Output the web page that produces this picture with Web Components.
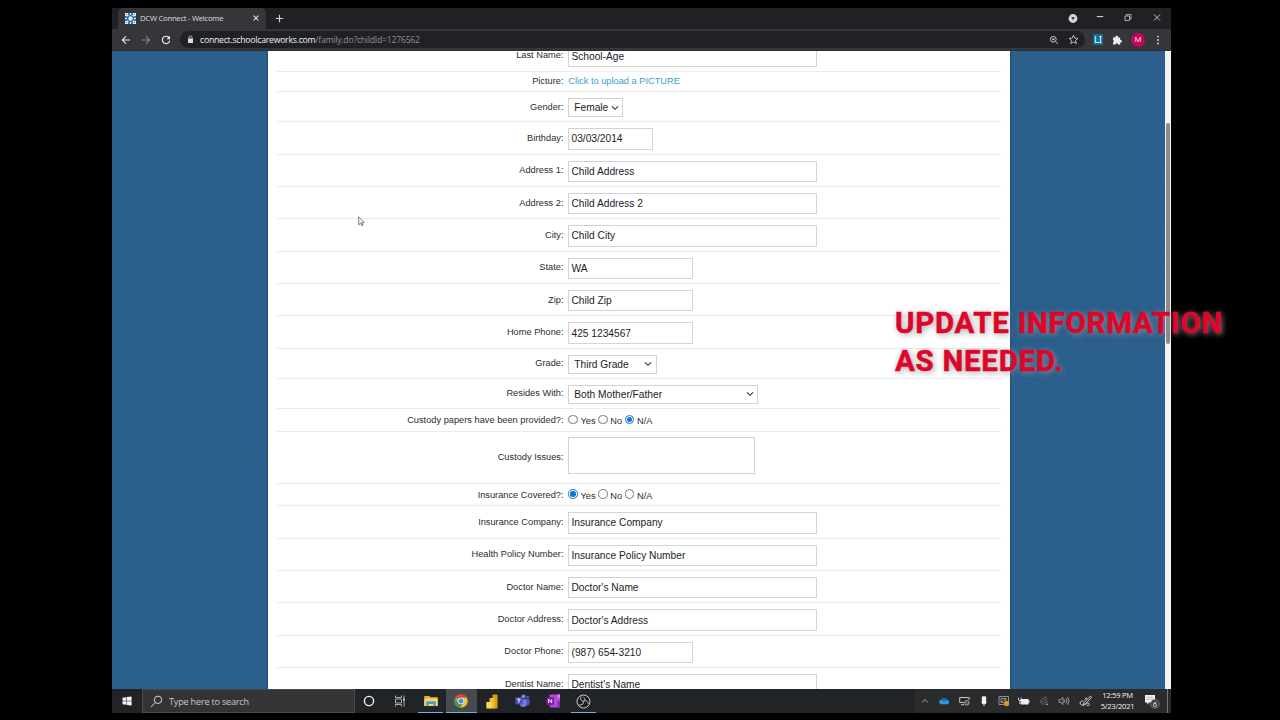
<!DOCTYPE html>
<html lang="en">
<head>
<meta charset="utf-8">
<title>DCW Connect - Welcome</title>
<style>
    body {
        margin: 0;
        width: 1280px;
        height: 720px;
        overflow: hidden;
        background: #000;
        font-family: "Liberation Sans", Arial, sans-serif;
    }
</style>
</head>
<body>
<screen-frame>
    <tab-strip slot="top" title-text="DCW Connect - Welcome"></tab-strip>
    <tool-bar slot="top" host="connect.schoolcareworks.com" path="/family.do?childId=1276562"></tool-bar>
    <page-view>
        <form-row label="Last Name:" h="32.38"><text-field w="248.6">School-Age</text-field></form-row>
        <form-row label="Picture:" h="20.4"><link-text>Click to upload a PICTURE</link-text></form-row>
        <form-row label="Gender:" h="30"><select-field w="54.7">Female</select-field></form-row>
        <form-row label="Birthday:" h="32.38"><text-field w="85">03/03/2014</text-field></form-row>
        <form-row label="Address 1:" h="32.38"><text-field w="248.6">Child Address</text-field></form-row>
        <form-row label="Address 2:" h="32.38"><text-field w="248.6">Child Address 2</text-field></form-row>
        <form-row label="City:" h="32.38"><text-field w="248.6">Child City</text-field></form-row>
        <form-row label="State:" h="32.38"><text-field w="125">WA</text-field></form-row>
        <form-row label="Zip:" h="32.38"><text-field w="125">Child Zip</text-field></form-row>
        <form-row label="Home Phone:" h="32.38"><text-field w="125">425 1234567</text-field></form-row>
        <form-row label="Grade:" h="30.1"><select-field w="88.3">Third Grade</select-field></form-row>
        <form-row label="Resides With:" h="30.1"><select-field w="189.7">Both Mother/Father</select-field></form-row>
        <form-row label="Custody papers have been provided?:" h="22.6"><radio-set checked="N/A"></radio-set></form-row>
        <form-row label="Custody Issues:" h="52.3"><area-field></area-field></form-row>
        <form-row label="Insurance Covered?:" h="22.4"><radio-set checked="Yes"></radio-set></form-row>
        <form-row label="Insurance Company:" h="32.38"><text-field w="248.6">Insurance Company</text-field></form-row>
        <form-row label="Health Policy Number:" h="32.38"><text-field w="248.6">Insurance Policy Number</text-field></form-row>
        <form-row label="Doctor Name:" h="32.38"><text-field w="248.6">Doctor's Name</text-field></form-row>
        <form-row label="Doctor Address:" h="32.38"><text-field w="248.6">Doctor's Address</text-field></form-row>
        <form-row label="Doctor Phone:" h="32.38"><text-field w="125">(987) 654-3210</text-field></form-row>
        <form-row label="Dentist Name:" h="32.38"><text-field w="248.6">Dentist's Name</text-field></form-row>
    </page-view>
    <task-bar slot="bottom"></task-bar>
</screen-frame>
<video-caption><span>UPDATE INFORMATION</span><span slot="second">AS NEEDED.</span></video-caption>
<mouse-pointer></mouse-pointer>

<script>
class BaseElement extends HTMLElement {
    connectedCallback() {
        const template = document.createElement("template");
        template.innerHTML = this.getStyles() + this.getTemplate();
        this.attachShadow({ mode: "open" });
        this.shadowRoot.appendChild(template.content.cloneNode(true));
    }
    getStyles() { return ""; }
    getTemplate() { return "<slot></slot>"; }
}

class ScreenFrame extends BaseElement {
    getStyles() {
        return `<style>
            :host { display: flex; flex-direction: column; width: 1059px; height: 705px; margin: 8px 0 0 112px; overflow: hidden; }
            .middle { flex: 1; min-height: 0; display: flex; }
        </style>`;
    }
    getTemplate() {
        return `<slot name="top"></slot><div class="middle"><slot></slot></div><slot name="bottom"></slot>`;
    }
}

class TabStrip extends BaseElement {
    getStyles() {
        return `<style>
            :host { display: flex; height: 21px; flex: none; background: #202124; font-family: "Open Sans", "Noto Sans", sans-serif; }
            .tab { box-sizing: border-box; width: 148px; margin-left: 6px; padding: 0 6px 1px 6.5px; display: flex; align-items: center; background: #35363a; border-radius: 5px 5px 0 0; color: #dcdde0; font-size: 7.7px; white-space: nowrap; }
            .tab span { flex: 1; margin-left: 4.5px; letter-spacing: -.26px; }
            .plus { width: 26px; display: flex; align-items: center; justify-content: center; }
            .window { margin-left: auto; display: flex; align-items: center; padding-bottom: 2px; }
            .window div { width: 28px; display: flex; justify-content: center; }
            svg { display: block; }
        </style>`;
    }
    getTemplate() {
        return `
        <div class="tab">
            <svg width="11" height="11" viewBox="0 0 11 11"><rect width="11" height="11" fill="#e8f0f7"/><path d="M3 0h2v2H3zM6 0h2v2H6zM0 3h2v2H0zM0 6h2v2H0zM9 3h2v2H9zM9 6h2v2H9zM3 9h2v2H3zM6 9h2v2H6zM1 1h1v1H1zM9 1h1v1H9zM1 9h1v1H1zM9 9h1v1H9z" fill="#3e79ae"/><circle cx="5.5" cy="5.5" r="2.9" fill="none" stroke="#2c6499" stroke-width="1.4"/></svg>
            <span>${this.getAttribute("title-text")}</span>
            <svg width="8" height="8" viewBox="0 0 8 8"><path d="M1.6 1.6l4.8 4.8M6.4 1.6L1.6 6.4" stroke="#e3e4e6" stroke-width="1.1"/></svg>
        </div>
        <div class="plus"><svg width="9" height="9" viewBox="0 0 9 9"><path d="M4.5.8v7.4M.8 4.5h7.4" stroke="#d0d2d4" stroke-width="1.1"/></svg></div>
        <div class="window">
            <div style="width:27px"><svg width="10" height="10" viewBox="0 0 10 10"><circle cx="5" cy="5.5" r="4.4" fill="#d5d6d8"/><path d="M3.2 4.2h3.6L5 7z" fill="#202124"/></svg></div>
            <div><svg width="8" height="8" viewBox="0 0 8 8"><path d="M.8 2.6h6.4" stroke="#dcdddf"/></svg></div>
            <div><svg width="8" height="8" viewBox="0 0 8 8"><path d="M1 2h4.5v4.5H1zM2.5 1.9V.5H7V5H5.6" fill="none" stroke="#c8c9cb" stroke-width=".8"/></svg></div>
            <div style="width:29px"><svg width="8" height="8" viewBox="0 0 8 8"><path d="M1 .5l6 6M7 .5l-6 6" stroke="#d5d6d8" stroke-width=".9"/></svg></div>
        </div>`;
    }
}

class ToolBar extends BaseElement {
    getStyles() {
        return `<style>
            :host { display: flex; align-items: center; height: 22px; flex: none; box-sizing: border-box; padding-left: 4px; background: #35363a; font-family: "Open Sans", "Noto Sans", sans-serif; border-bottom: 1px solid #2b3038; }
            .nav { width: 20px; display: flex; justify-content: center; }
            .omnibox { width: 905px; height: 17px; margin-left: 4px; box-sizing: border-box; padding: 0 6px 0 6px; border-radius: 9px; background: #202124; display: flex; align-items: center; font-size: 8.7px; color: #8d9094; white-space: nowrap; }
            .url { margin-left: 5px; flex: 1; letter-spacing: -.25px; }
            b { font-weight: 400; color: #f0f1f2; }
            .omnibox svg + svg { margin-left: 9px; }
            .li { width: 10px; height: 11px; margin-left: 8px; background: #0c6f93; color: #fff; font: 9.5px/11px "Noto Sans", sans-serif; text-align: center; }
            .m { width: 14px; height: 14px; border-radius: 7px; margin: 0 8px 0 9px; background: #c2045f; color: #f7cfe2; font: 8px/14px Roboto, sans-serif; text-align: center; }
            svg { display: block; }
        </style>`;
    }
    getTemplate() {
        return `
        <div class="nav"><svg width="10" height="10" viewBox="0 0 10 10"><path d="M9 5H1.5M5 1.3L1.3 5 5 8.7" fill="none" stroke="#e8e9eb" stroke-width="1.1"/></svg></div>
        <div class="nav"><svg width="10" height="10" viewBox="0 0 10 10"><path d="M1 5h7.5M5 1.3L8.7 5 5 8.7" fill="none" stroke="#85878b" stroke-width="1.1"/></svg></div>
        <div class="nav"><svg width="10" height="10" viewBox="0 0 10 10"><path d="M8.2 3A3.7 3.7 0 1 0 8.7 5.6" fill="none" stroke="#e8e9eb" stroke-width="1.2"/><path d="M9 .8v3.5H5.5z" fill="#e8e9eb"/></svg></div>
        <div class="omnibox">
            <svg width="9" height="9" viewBox="0 0 9 9"><rect x="2" y="3.6" width="5" height="4.4" rx=".5" fill="#dcdde0"/><path d="M3 4V2.5a1.5 1.5 0 0 1 3 0V4" fill="none" stroke="#dcdde0" stroke-width=".8"/></svg>
            <div class="url"><b>${this.getAttribute("host")}</b>${this.getAttribute("path")}</div>
            <svg width="10" height="10" viewBox="0 0 10 10"><circle cx="4.3" cy="4.3" r="2.9" fill="none" stroke="#c8cacd"/><path d="M6.4 6.4L9 9M3 4.3h2.6M4.3 3v2.6" stroke="#c8cacd" stroke-width=".9"/></svg>
            <svg width="11" height="11" viewBox="0 0 11 11"><path d="M5.5 1.2l1.3 2.9 3.1.3-2.4 2.1.8 3.1-2.8-1.7-2.8 1.7.8-3.1L1.1 4.4l3.1-.3z" fill="none" stroke="#c8cacd" stroke-width=".9"/></svg>
        </div>
        <div class="li">LI</div>
        <svg style="margin-left:9px" width="10" height="10" viewBox="0 0 10 10"><path d="M1 2.6h2.4a1.4 1.4 0 1 1 2.6 0h2.2V5a1.3 1.3 0 1 1 0 2.5v2H6a1.2 1.2 0 0 0-2.4 0H1V7.2a1.2 1.2 0 0 0 0-2.3z" fill="#eceded"/></svg>
        <div class="m">M</div>
        <svg width="10" height="10" viewBox="0 0 10 10"><g fill="#e0e1e3"><circle cx="5" cy="1.6" r=".9"/><circle cx="5" cy="5" r=".9"/><circle cx="5" cy="8.4" r=".9"/></g></svg>`;
    }
}

class PageView extends BaseElement {
    getStyles() {
        return `<style>
            :host { flex: 1; min-width: 0; display: flex; }
            .back { flex: 1; min-width: 0; display: grid; overflow: hidden; background: #2b608d; }
            .back > * { grid-area: 1 / 1; }
            .sheet { box-sizing: border-box; width: 741.5px; height: 638px; margin-left: 156px; padding: 0 9px 0 8px; overflow: hidden; background: #fff; box-shadow: 0 0 2px #0b3459; z-index: 1; }
            .scrolled { margin-top: -11.6px; }
            .bar { width: 6.5px; background: #f3f3f1; display: flex; justify-content: center; }
            .thumb { width: 4px; height: 221px; margin-top: 72px; border-radius: 2px; background: #8c8c8a; }
        </style>`;
    }
    getTemplate() {
        return `
        <div class="back">
            <svg width="1053" height="638">
                <defs>
                    <pattern id="waves" width="72" height="58" patternUnits="userSpaceOnUse">
                        <g fill="none" stroke="#1d4f80" stroke-width=".9" opacity=".26">
                            <circle cx="18" cy="22" r="4"/><circle cx="18" cy="22" r="8"/><circle cx="18" cy="22" r="12"/><circle cx="18" cy="22" r="16"/>
                            <path d="M34 48a20 20 0 0 1 36 0M38 51a16 16 0 0 1 28 0M42 54a12 12 0 0 1 20 0M46 57a8 8 0 0 1 12 0"/>
                            <path d="M40 26a15 15 0 0 1 28-4M44 28a11 11 0 0 1 20-4M48 29a7 7 0 0 1 12-3M2 50a14 14 0 0 1 26 3M7 53a9 9 0 0 1 17 3"/>
                        </g>
                    </pattern>
                </defs>
                <rect width="1053" height="638" fill="url(#waves)"/>
            </svg>
            <div class="sheet"><div class="scrolled"><slot></slot></div></div>
        </div>
        <div class="bar"><div class="thumb"></div></div>`;
    }
}

class FormRow extends BaseElement {
    getStyles() {
        return `<style>
            :host { display: flex; align-items: center; gap: 4.8px; box-sizing: border-box; height: ${this.getAttribute("h")}px; border-bottom: 1px solid #ececec; }
            label { width: 287.5px; text-align: right; font-size: 9.25px; line-height: 12px; color: #2c2c2c; white-space: nowrap; }
        </style>`;
    }
    getTemplate() {
        return `<label>${this.getAttribute("label")}</label><slot></slot>`;
    }
}

class TextField extends BaseElement {
    getStyles() {
        return `<style>
            :host { box-sizing: border-box; width: ${this.getAttribute("w")}px; height: 21.3px; margin-top: 2px; padding-left: 2.2px; border: 1px solid #d4d4d4; display: flex; align-items: center; font-size: 10.2px; color: #1c1c1c; background: #fff; white-space: nowrap; }
        </style>`;
    }
}

class SelectField extends BaseElement {
    getStyles() {
        return `<style>
            :host { box-sizing: border-box; width: ${this.getAttribute("w")}px; height: 18.8px; margin-top: 2px; padding: 0 3.2px 0 5px; border: 1px solid #d2d2d2; display: flex; align-items: center; justify-content: space-between; font-size: 10.2px; color: #1c1c1c; background: #fff; white-space: nowrap; }
        </style>`;
    }
    getTemplate() {
        return `<span><slot></slot></span><svg width="8" height="6" viewBox="0 0 8 6"><path d="M1 1.3l3 3 3-3" fill="none" stroke="#333" stroke-width="1.1"/></svg>`;
    }
}

class AreaField extends BaseElement {
    getStyles() {
        return `<style>
            :host { box-sizing: border-box; width: 187px; height: 37px; margin-bottom: 3px; border: 1px solid #d2d2d2; background: #fff; }
        </style>`;
    }
    getTemplate() { return ""; }
}

class LinkText extends BaseElement {
    getStyles() {
        return `<style>:host { display: block; font-size: 9.25px; line-height: 12px; color: #3ba0cb; white-space: nowrap; }</style>`;
    }
}

class RadioSet extends BaseElement {
    getStyles() {
        return `<style>
            :host { display: flex; align-items: center; font-size: 9.25px; line-height: 12px; color: #2c2c2c; }
            i { box-sizing: border-box; width: 9.4px; height: 9.4px; border: 1px solid #777; border-radius: 50%; margin: 0 2.8px 1px 0; display: flex; align-items: center; justify-content: center; background: #fff; }
            i.on { border-color: #1473d6; }
            i.on::after { content: ""; width: 5.4px; height: 5.4px; border-radius: 50%; background: #1473d6; }
            span { padding-top: 2px; margin-right: 2.6px; }
        </style>`;
    }
    getTemplate() {
        return ["Yes", "No", "N/A"].map(t =>
            `<i class="${t === this.getAttribute("checked") ? "on" : ""}"></i><span>${t}</span>`).join("");
    }
}

class TaskBar extends BaseElement {
    getStyles() {
        return `<style>
            :host { display: flex; height: 24px; flex: none; background: #202426; font-family: "Open Sans", "Noto Sans", sans-serif; color: #f2f2f2; }
            svg { display: block; }
            .cell { display: flex; align-items: center; justify-content: center; box-sizing: border-box; }
            .start { width: 30px; }
            .search { width: 213px; box-sizing: border-box; display: flex; align-items: center; gap: 6px; padding-left: 7px; background: #333435; border: 1px solid #4a4b4c; font-size: 9.1px; letter-spacing: -.2px; color: #c9c9c9; }
            .apps { display: flex; margin-left: -1px; }
            .apps .cell { width: 30.65px; }
            .open { background: linear-gradient(#6cb5e8, #6cb5e8) center bottom / 25px 1.5px no-repeat; }
            .active { background: linear-gradient(#6cb5e8, #6cb5e8) center bottom / 100% 1.5px no-repeat #484b4e; }
            .tray { margin-left: auto; display: flex; background: #2a2b2c; }
            .tray .cell { width: 19.85px; }
            .tray .pen { width: 24px; }
            .clock { width: 40px; font-size: 7.6px; line-height: 11.4px; text-align: center; white-space: nowrap; letter-spacing: -.25px; padding-top: 1px; }
            .tray .notes { width: 29px; }
            .show { width: 3.5px; border-left: 1px solid #77797a; }
        </style>`;
    }
    getTemplate() {
        return `
        <div class="cell start"><svg width="10" height="10" viewBox="0 0 10 10"><path d="M.5 1.8l3.8-.6v3.5H.5zM4.8 1.1L9.6.4v4.3H4.8zM.5 5.2h3.8v3.6L.5 8.2zM4.8 5.2h4.8v4.4l-4.8-.7z" fill="#f4f4f4"/></svg></div>
        <div class="search">
            <svg width="13" height="13" viewBox="0 0 13 13"><circle cx="8" cy="4.8" r="3.7" fill="none" stroke="#d5d5d5"/><path d="M5.3 7.5L1 12" stroke="#d5d5d5"/></svg>
            <span>Type here to search</span>
        </div>
        <div class="apps">
            <div class="cell"><svg width="12" height="12" viewBox="0 0 12 12"><circle cx="6" cy="6" r="4.6" fill="none" stroke="#f2f2f2" stroke-width="1.4"/></svg></div>
            <div class="cell"><svg width="12" height="12" viewBox="0 0 12 12"><path d="M1.5.5v2h6v-2M1.5 11.5v-2h6v2M1.5 4h6v4h-6zM10 .5v11" fill="none" stroke="#b9bbbc" stroke-width=".9"/><path d="M9.2 3.5h1.6v2H9.2z" fill="#ddd"/></svg></div>
            <div class="cell open"><svg width="14" height="12" viewBox="0 0 14 12"><path d="M.3 1h5l1.2 1.3h7.2V11H.3z" fill="#e7b33a"/><path d="M.3 3.6h13.4V11H.3z" fill="#fbd766"/><path d="M2.2 6.3h9.6v4.9H9.3V8.9H4.7v2.3H2.2z" fill="#4b9dc9"/></svg></div>
            <div class="cell active"><svg width="14" height="14" viewBox="0 0 14 14"><circle cx="7" cy="7" r="6.6" fill="#ddb52d"/><path d="M7 7L1.3 3.7A6.6 6.6 0 0 1 12.7 3.7z" fill="#d94a3a"/><path d="M1.3 3.7A6.6 6.6 0 0 0 6.3 13.5L9.6 8.5 7 7 4.3 8.5z" fill="#3c9e55"/><path d="M7 3.7h5.7A6.6 6.6 0 0 1 6.3 13.5L9.8 8.6z" fill="#edc236"/><circle cx="7" cy="7" r="3.3" fill="#f4f4f4"/><circle cx="7" cy="7" r="2.5" fill="#4c8bea"/></svg></div>
            <div class="cell"><svg width="14" height="15" viewBox="0 0 14 15"><rect x="7.5" y=".5" width="5" height="14" rx=".7" fill="#d9a016"/><rect x="4.5" y="4" width="5" height="10.5" rx=".7" fill="#efc02e"/><rect x="1.3" y="8" width="5" height="6.5" rx=".7" fill="#f8d95c"/></svg></div>
            <div class="cell"><svg width="15" height="14" viewBox="0 0 15 14"><circle cx="8.5" cy="2.5" r="2.1" fill="#7b83eb"/><circle cx="12.7" cy="3.3" r="1.4" fill="#5059c9"/><path d="M10 5.2h4.6v4a2.5 2.5 0 0 1-4.6 1z" fill="#4d57c2"/><path d="M5 5.2h6.6v4.6a3.3 3.3 0 0 1-6.6 0z" fill="#7078df"/><rect x=".3" y="3.3" width="7.2" height="7.2" rx=".8" fill="#454fb8"/><path d="M2.2 5.2h3.4M3.9 5.2v3.6" stroke="#fff"/></svg></div>
            <div class="cell"><svg width="15" height="14" viewBox="0 0 15 14"><rect x="3.6" y=".5" width="10.4" height="13" rx=".8" fill="#b24bd6"/><path d="M11.5.5H14v3.2h-2.5z" fill="#d890ef"/><path d="M11.5 7H14v6.5h-2.5z" fill="#8b2bb0"/><rect x=".4" y="3.3" width="7.6" height="7.6" rx=".7" fill="#7d1aa3"/><path d="M2.7 9V5.2L5.7 9V5.2" fill="none" stroke="#fff" stroke-width=".9"/></svg></div>
            <div class="cell open"><svg width="15" height="15" viewBox="0 0 15 15"><circle cx="7.5" cy="7.5" r="6.5" fill="#1c1d1e" stroke="#dedede" stroke-width=".9"/><path d="M7.3 7.2C4.2 6.5 4 3.6 5.6 2.7M7.3 7.2c3-1.2 5.3.4 4.8 2.8M7.3 7.2c.5 3-1.7 4.6-4 3.4M8.7 6.8c.5-1.8 0-3-1.3-3.7" fill="none" stroke="#d8d8d8" stroke-width=".9"/></svg></div>
        </div>
        <div class="tray">
            <div class="cell"><svg width="8" height="6" viewBox="0 0 8 6"><path d="M1 4.6l3-3 3 3" fill="none" stroke="#bbb" stroke-width=".9"/></svg></div>
            <div class="cell"><svg width="11" height="8" viewBox="0 0 11 8"><path d="M2.4 7.2a2.2 2.2 0 0 1 0-4.4A3.2 3.2 0 0 1 8.2 3a2.2 2.2 0 0 1 .6 4.2z" fill="#2b9be8"/><path d="M2.4 2.8A3.2 3.2 0 0 1 8.2 3L5 4.6z" fill="#1268b8"/></svg></div>
            <div class="cell"><svg width="11" height="10" viewBox="0 0 11 10"><path d="M4.8 6.5H.7v-5h9.4V4M2 8.7h3" fill="none" stroke="#d8d8d8" stroke-width=".9"/><circle cx="7.8" cy="6.8" r="2.2" fill="none" stroke="#d8d8d8" stroke-width=".8"/><path d="M7 6l1.6 1.6" stroke="#d8d8d8" stroke-width=".7"/></svg></div>
            <div class="cell"><svg width="8" height="11" viewBox="0 0 8 11"><rect x="1.8" y=".3" width="4.4" height="7.9" rx="1.4" fill="#f2f2f2"/><path d="M1.5 6.5q2.5 3.2 5 0M4 8.2v2" fill="none" stroke="#ddd" stroke-width=".8"/></svg></div>
            <div class="cell"><svg width="12" height="12" viewBox="0 0 12 12"><path d="M1 1.5h9.5v8H1zM3 3.5h5v4H3zM3 7.5l5-4" fill="none" stroke="#b5a999" stroke-width=".8"/><circle cx="8.6" cy="8.6" r="2.6" fill="#e79a23"/></svg></div>
            <div class="cell"><svg width="12" height="9" viewBox="0 0 12 9"><path d="M2.8 2h7.7v5.5H2.8zM10.5 3.6h1v2.2h-1z" fill="#ededed"/><path d="M.6.7v2.2q1.3 1.6 2.6 0V.7M1.9 3v4" fill="none" stroke="#ededed" stroke-width=".9"/></svg></div>
            <div class="cell"><svg width="10" height="10" viewBox="0 0 10 10"><g fill="none" stroke="#7b7c7d" stroke-width=".8"><path d="M1 7A7 7 0 0 1 8 1.2M2.8 8.2A5 5 0 0 1 8.5 3.6M4.8 9a3 3 0 0 1 4-3"/></g><circle cx="8" cy="8.4" r=".8" fill="#bbb"/></svg></div>
            <div class="cell"><svg width="12" height="10" viewBox="0 0 12 10"><path d="M1 3.6h1.7L5 1.5v7L2.7 6.4H1zM6.4 3.6q1 1.4 0 2.8M8 2.4q2 2.6 0 5.2M9.6 1.2q3 3.8 0 7.6" fill="none" stroke="#b5b6b7" stroke-width=".8"/></svg></div>
            <div class="cell pen"><svg width="13" height="12" viewBox="0 0 13 12"><path d="M11.6 1L5 7.5l-.8 2.2 2.2-.8L12.6 2.3zM4.5 6C2 5.5.4 7.4 1.3 9s3.4.4 3.5 2M6.5 9.5c1.8-2.3 4.3-1.6 4 0s-2.5 1.3-3 .4M6 4.8C6 3 8 2.4 8.4 4" fill="none" stroke="#e0e0e0" stroke-width=".9"/></svg></div>
            <div class="clock"><div>12:59 PM</div><div>5/23/2021</div></div>
            <div class="cell notes"><svg width="16" height="16" viewBox="0 0 16 16"><path d="M1 2h10v7.5H5.2L3.2 11.5v-2H1z" fill="#f2f2f2"/><path d="M2.5 4.3h7M2.5 6.3h7" stroke="#999" stroke-width=".6"/><circle cx="10.9" cy="10.9" r="4.4" fill="#3a3b3c" stroke="#8b8b8b" stroke-width=".7"/><text x="10.9" y="13.6" font-size="7.6" text-anchor="middle" fill="#eee">6</text></svg></div>
            <div class="show"></div>
        </div>`;
    }
}

// caption laid over the recording
class VideoCaption extends BaseElement {
    getStyles() {
        return `<style>
            :host { position: absolute; left: 895px; top: 305px; z-index: 5; font: 700 29.5px/37.5px Roboto, "Open Sans", sans-serif; color: #df0429; white-space: nowrap; text-shadow: 1px 1px 6px rgba(150, 150, 150, .6), 2px 2px 6px rgba(150, 150, 150, .4); }
            div { letter-spacing: .73px; -webkit-text-stroke: .5px #df0429; }
        </style>`;
    }
    getTemplate() {
        return `<div><slot></slot></div><div><slot name="second"></slot></div>`;
    }
}

class MousePointer extends BaseElement {
    getStyles() {
        return `<style>:host { position: absolute; left: 358px; top: 216px; z-index: 5; } svg { display: block; }</style>`;
    }
    getTemplate() {
        return `<svg width="8" height="11" viewBox="0 0 8 11"><path d="M.7.8v8l1.9-1.7 1.2 2.6 1.2-.6L3.9 6.6h2.3z" fill="#fff" stroke="#444" stroke-width=".7"/></svg>`;
    }
}

customElements.define("screen-frame", ScreenFrame);
customElements.define("tab-strip", TabStrip);
customElements.define("tool-bar", ToolBar);
customElements.define("page-view", PageView);
customElements.define("form-row", FormRow);
customElements.define("text-field", TextField);
customElements.define("select-field", SelectField);
customElements.define("area-field", AreaField);
customElements.define("link-text", LinkText);
customElements.define("radio-set", RadioSet);
customElements.define("task-bar", TaskBar);
customElements.define("video-caption", VideoCaption);
customElements.define("mouse-pointer", MousePointer);
</script>
</body>
</html>
